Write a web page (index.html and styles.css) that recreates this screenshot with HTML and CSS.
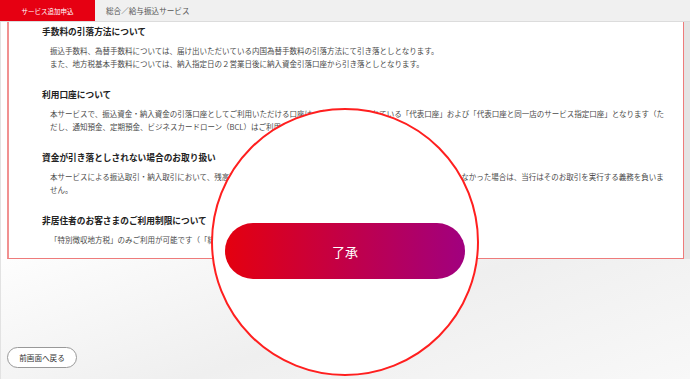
FILE: index.html
```html
<!DOCTYPE html>
<html lang="ja">
<head>
  <meta charset="UTF-8">
  <meta name="viewport" content="width=device-width, initial-scale=1.0">
  <title>サービス追加申込</title>
  <link rel="stylesheet" href="styles.css">
</head>
<body>

  <div class="tabs">
    <div class="tab active">サービス追加申込</div>
    <div class="tab">総合／給与振込サービス</div>
  </div>

  <main class="page">
    <div class="scroll">
      <div class="panel">
        <section class="item">
          <h2>手数料の引落方法について</h2>
          <p>振込手数料、為替手数料については、届け出いただいている内国為替手数料の引落方法にて引き落としとなります。<br>また、地方税基本手数料については、納入指定日の２営業日後に納入資金引落口座から引き落としとなります。</p>
        </section>
        <section class="item">
          <h2>利用口座について</h2>
          <p>本サービスで、振込資金・納入資金の引落口座としてご利用いただける口座は、当行に届け出されている「代表口座」および「代表口座と同一店のサービス指定口座」となります（ただし、通知預金、定期預金、ビジネスカードローン（BCL）はご利用いただけません）。</p>
        </section>
        <section class="item">
          <h2>資金が引き落としされない場合のお取り扱い</h2>
          <p>本サービスによる振込取引・納入取引において、残高不足等により、引落口座から振込資金・納入資金の引き落としができなかった場合は、当行はそのお取引を実行する義務を負いません。</p>
        </section>
        <section class="item">
          <h2>非居住者のお客さまのご利用制限について</h2>
          <p>「特別徴収地方税」のみご利用が可能です（「総合振込」「給与振込」はご利用いただけません）。</p>
        </section>
      </div>
    </div>

    <div class="actions">
      <button class="back">前画面へ戻る</button>
    </div>
  </main>

  <!-- 了承ボタンの強調表示 -->
  <div class="spot">
    <button class="agree">了承</button>
  </div>

</body>
</html>
```

FILE: styles.css
```css
* {
  box-sizing: border-box;
}

body {
  margin: 0;
  width: 690px;
  height: 379px;
  overflow: hidden;
  position: relative;
  font-family: "Noto Sans CJK JP", "Noto Sans", sans-serif;
  background: #fff;
  text-spacing-trim: space-all;
}

.tabs {
  display: flex;
  height: 22px;
  background: #f0f0f0;
  border-bottom: 1px solid #dcdcdc;
}

.tab {
  display: flex;
  align-items: center;
  padding: 0 11px;
  font-size: 7.6px;
  color: #555;
}

.tab.active {
  width: 95px;
  justify-content: center;
  padding: 0;
  background: #e60012;
  color: #fff;
  font-size: 6.5px;
}

.page {
  height: 357px;
  border-left: 1px solid #e2e2e2;
  background: linear-gradient(160deg, #fff 35%, #efefef 70%, #f8f8f8 100%);
}

.scroll {
  padding: 0 6px;
  background: linear-gradient(to right, #fff 682px, #e4e4e4 683px);
}

.panel {
  background: #fff;
  border: 1px solid #ee7b7b;
  border-top: none;
  border-left: 2px solid #f19191;
  padding: 2.5px 16px 12px 33px;
}

.item {
  margin-bottom: 17px;
}

.item:last-child {
  margin-bottom: 0;
}

.item h2 {
  margin: 0 0 6px;
  font-size: 8.7px;
  line-height: 13px;
  font-weight: bold;
  color: #222;
}

.item p {
  margin: 0;
  padding-left: 8px;
  font-size: 7.5px;
  line-height: 13.5px;
  color: #4a4a4a;
}

.actions {
  display: flex;
  padding: 88px 0 0 6px;
}

.back {
  width: 70px;
  height: 21px;
  padding: 0;
  border: 1px solid #999;
  border-radius: 11px;
  background: #fff;
  font-family: inherit;
  font-size: 7.6px;
  color: #333;
}

.spot {
  position: absolute;
  left: 211px;
  top: 108px;
  width: 268px;
  height: 268px;
  border: 2px solid #ff1f1f;
  border-radius: 50%;
  background: #fff;
  display: flex;
  align-items: center;
  justify-content: center;
}

.agree {
  width: 240px;
  height: 56px;
  margin-top: 18px;
  border: none;
  border-radius: 28px;
  background: linear-gradient(to right, #e4000f, #c20047 50%, #a1007f);
  font-family: inherit;
  font-size: 13px;
  color: #fff;
}
```
